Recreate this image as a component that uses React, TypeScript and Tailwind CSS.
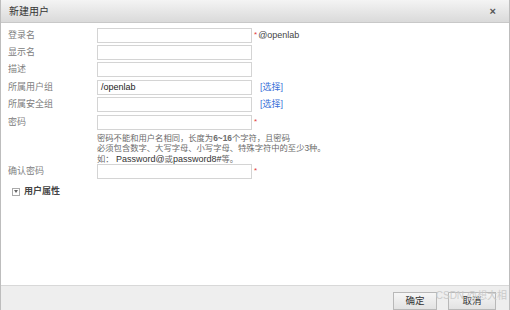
import React from "react";

const font = { fontFamily: '"Liberation Sans", Arial, "Noto Sans CJK SC", sans-serif' };

function Row({ label, value, extra, mt }: { label: string; value?: string; extra?: React.ReactNode; mt?: string }) {
  return (
    <div className={`flex items-center h-[15px] ${mt ?? "mt-[2px]"}`}>
      <div className="w-[96px] pl-[7px] text-[9px] text-[#808080] leading-none">{label}</div>
      <div className="w-[155px] h-[15px] border border-[#d4d4d4] bg-white flex items-center pl-[3px] text-[9px] text-[#222]">
        {value}
      </div>
      {extra}
    </div>
  );
}

const Star = () => <span className="text-[#e23b3b] text-[8px] ml-[2px] self-start mt-[1px]">*</span>;
const Pick = () => <span className="ml-[8px] text-[9px] text-[#3a6fd8]">[选择]</span>;

export default function App() {
  return (
    <div className="w-[510px] h-[310px] flex flex-col bg-white border-l border-r border-[#bdbdbd] relative overflow-hidden" style={font}>
      <div className="h-[23px] flex items-center justify-between px-[8px] bg-gradient-to-b from-[#f4f4f4] to-[#dadada] border-b border-[#c8c8c8]">
        <span className="text-[10px] text-[#333]">新建用户</span>
        <span className="text-[11px] text-[#555] font-bold mr-[5px]">×</span>
      </div>
      <div className="flex-1 pt-[5px]">
        <Row label="登录名" mt="mt-0" extra={<><Star /><span className="text-[9px] text-[#444] ml-[1px]">@openlab</span></>} />
        <Row label="显示名" />
        <Row label="描述" />
        <Row label="所属用户组" value="/openlab" mt="mt-[3px]" extra={<Pick />} />
        <Row label="所属安全组" extra={<Pick />} />
        <Row label="密码" mt="mt-[3px]" extra={<Star />} />
        <div className="pl-[96px] mt-[3px] text-[8.3px] leading-[10.3px] text-[#6a6a6a] whitespace-nowrap">
          <div>密码不能和用户名相同，长度为<span className="font-bold">6~16</span>个字符，且密码</div>
          <div>必须包含数字、大写字母、小写字母、特殊字符中的至少3种。</div>
          <div>如： <span className="text-[#333] text-[9px]">Password@</span>或<span className="text-[#333] text-[9px]">password8#</span>等。</div>
        </div>
        <Row label="确认密码" mt="mt-0" extra={<Star />} />
        <div className="flex items-center mt-[6px] pl-[11px]">
          <div className="w-[8px] h-[8px] border border-[#aaa] bg-white flex items-center justify-center">
            <div className="w-0 h-0 border-l-[2px] border-r-[2px] border-t-[3px] border-l-transparent border-r-transparent border-t-[#666]" />
          </div>
          <span className="ml-[4px] text-[9px] font-bold text-[#444]">用户属性</span>
        </div>
      </div>
      <div className="h-[25px] bg-[#eeeeee] border-t border-[#d8d8d8] flex items-end justify-end pr-[13px] gap-[11px]">
        <button className="w-[44px] h-[18px] border border-[#b8b8b8] bg-gradient-to-b from-[#f6f6f6] to-[#e2e2e2] text-[9.5px] text-[#333]">确定</button>
        <button className="w-[48px] h-[18px] border border-[#b8b8b8] bg-gradient-to-b from-[#f6f6f6] to-[#e2e2e2] text-[9.5px] text-[#333]">取消</button>
      </div>
      <div className="absolute right-[2px] bottom-[7px] text-[10px] text-[#c8c8c8] opacity-90">CSDN @想大相</div>
    </div>
  );
}
